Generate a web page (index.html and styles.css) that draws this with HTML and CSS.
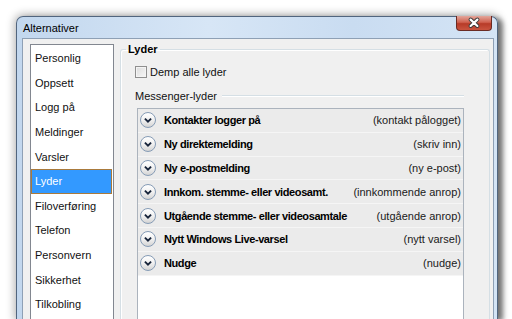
FILE: index.html
```html
<!DOCTYPE html>
<html>
<head>
    <meta charset="UTF-8">
    <title>Alternativer</title>
    <link rel="stylesheet" href="styles.css">
</head>
<body>
    <div class="desk">
        <div class="window">
            <div class="titlebar">
                <span class="title">Alternativer</span>
                <span class="close">
                    <svg width="35" height="14" viewBox="0 0 35 14">
                        <path d="M14 3.5 L21 10 M21 3.5 L14 10" stroke="#3b3b3b" stroke-width="4.2" stroke-linecap="round" fill="none"/>
                        <path d="M14 3.5 L21 10 M21 3.5 L14 10" stroke="#fff" stroke-width="2.2" stroke-linecap="round" fill="none"/>
                    </svg>
                </span>
            </div>
            <div class="client">
                <ul class="nav">
                    <li>Personlig</li>
                    <li>Oppsett</li>
                    <li>Logg på</li>
                    <li>Meldinger</li>
                    <li>Varsler</li>
                    <li class="active">Lyder</li>
                    <li>Filoverføring</li>
                    <li>Telefon</li>
                    <li>Personvern</li>
                    <li>Sikkerhet</li>
                    <li>Tilkobling</li>
                </ul>
                <fieldset class="group">
                    <legend>Lyder</legend>
                    <label class="check"><span class="box"></span>Demp alle lyder</label>
                    <div class="sep"><span>Messenger-lyder</span></div>
                    <div class="sounds">
                        <div class="row"><span class="chev"><svg width="14" height="14" viewBox="0 0 14 14"><path d="M3.9 5.6 7 8.6 10.1 5.6" fill="none" stroke="#17243a" stroke-width="1.9"/></svg></span><b>Kontakter logger på</b><span class="hint">(kontakt pålogget)</span></div>
                        <div class="row"><span class="chev"><svg width="14" height="14" viewBox="0 0 14 14"><path d="M3.9 5.6 7 8.6 10.1 5.6" fill="none" stroke="#17243a" stroke-width="1.9"/></svg></span><b>Ny direktemelding</b><span class="hint">(skriv inn)</span></div>
                        <div class="row"><span class="chev"><svg width="14" height="14" viewBox="0 0 14 14"><path d="M3.9 5.6 7 8.6 10.1 5.6" fill="none" stroke="#17243a" stroke-width="1.9"/></svg></span><b>Ny e-postmelding</b><span class="hint">(ny e-post)</span></div>
                        <div class="row"><span class="chev"><svg width="14" height="14" viewBox="0 0 14 14"><path d="M3.9 5.6 7 8.6 10.1 5.6" fill="none" stroke="#17243a" stroke-width="1.9"/></svg></span><b>Innkom. stemme- eller videosamt.</b><span class="hint">(innkommende anrop)</span></div>
                        <div class="row"><span class="chev"><svg width="14" height="14" viewBox="0 0 14 14"><path d="M3.9 5.6 7 8.6 10.1 5.6" fill="none" stroke="#17243a" stroke-width="1.9"/></svg></span><b>Utgående stemme- eller videosamtale</b><span class="hint">(utgående anrop)</span></div>
                        <div class="row"><span class="chev"><svg width="14" height="14" viewBox="0 0 14 14"><path d="M3.9 5.6 7 8.6 10.1 5.6" fill="none" stroke="#17243a" stroke-width="1.9"/></svg></span><b>Nytt Windows Live-varsel</b><span class="hint">(nytt varsel)</span></div>
                        <div class="row"><span class="chev"><svg width="14" height="14" viewBox="0 0 14 14"><path d="M3.9 5.6 7 8.6 10.1 5.6" fill="none" stroke="#17243a" stroke-width="1.9"/></svg></span><b>Nudge</b><span class="hint">(nudge)</span></div>
                    </div>
                </fieldset>
            </div>
        </div>
    </div>
</body>
</html>
```

FILE: styles.css
```css
/* reset */
html, body{
    margin: 0;
    padding: 0;
}

body{
    width: 512px;
    height: 319px;
    overflow: hidden;
    background: #fff;
    font-family: "Liberation Sans", Arial, sans-serif;
    font-size: 11px;
    color: #111;
}

/* desktop + window */
.desk{
    padding: 16px 0 0 16px;
}

.window{
    box-sizing: border-box;
    width: 482px;
    height: 303px;
    display: flex;
    flex-direction: column;
    padding: 0 3px 0 5px;
    border: 1px solid #51657e;
    border-bottom: none;
    border-radius: 7px 7px 0 0;
    background: linear-gradient(to right, #c2d7ee 0%, #d7e6f6 40%, #c9dcf1 70%, #d4e4f5 100%);
    box-shadow: 0 0 9px 2px rgba(0,0,0,0.28), 5px 2px 5px rgba(0,0,0,0.45);
}

.titlebar{
    height: 21px;
    display: flex;
    justify-content: space-between;
    align-items: flex-start;
}

.title{
    padding: 5px 0 0 1px;
    line-height: 13px;
    color: #000;
}

.close{
    box-sizing: border-box;
    width: 36px;
    height: 15px;
    margin: -1px 2px 0 0;
    border: 1px solid #6a2b24;
    border-top: none;
    border-radius: 0 0 4px 4px;
    background: linear-gradient(#e3a79c 0%, #d0614f 45%, #b73b28 55%, #c9543f 100%);
    display: flex;
    justify-content: center;
}

/* client area */
.client{
    flex: 1;
    display: flex;
    padding: 5px 3px 0 7px;
    background: #f0f0f0;
    border: 1px solid #8ea0b5;
    border-bottom: none;
}

.nav{
    width: 84px;
    box-sizing: border-box;
    flex-shrink: 0;
    margin: 0;
    padding: 1px 0 0 0;
    list-style: none;
    background: #fff;
    border: 1px solid #828790;
    border-bottom: none;
}

.nav li{
    box-sizing: border-box;
    height: 24.6px;
    display: flex;
    align-items: center;
    padding-left: 4px;
}

.nav li.active{
    margin: 0 1px 0 0;
    padding-left: 3px;
    background: #3399ff;
    color: #fff;
    border: 1px solid #a97a3c;
}

/* group box */
.group{
    flex: 1;
    min-width: 0;
    display: flex;
    flex-direction: column;
    margin: -2px 0 0 6px;
    padding: 0 25px 0 14px;
    border: 1px solid #d5dfe5;
    border-bottom: none;
    border-radius: 3px 3px 0 0;
    box-shadow: inset 1px 1px 0 #fff;
}

.group legend{
    margin-left: -9px;
    padding: 0 2px;
    font-weight: bold;
    line-height: 14px;
    color: #000;
}

.check{
    display: flex;
    align-items: center;
    gap: 3px;
    margin-top: 9px;
    line-height: 14px;
}

.check .box{
    box-sizing: border-box;
    width: 12px;
    height: 12px;
    border: 1px solid #8f8f8f;
    background: linear-gradient(135deg, #dcdcdc, #f7f7f7);
    box-shadow: inset 0 0 0 1px #f4f4f4;
}

.sep{
    display: flex;
    align-items: center;
    gap: 4px;
    margin-top: 10px;
    line-height: 14px;
}

.sep::after{
    content: "";
    flex: 1;
    height: 0;
    margin-left: 1px;
    border-top: 1px solid #d5dfe5;
    border-bottom: 1px solid #fff;
}

/* sound list */
.sounds{
    flex: 1;
    margin: 5px 0 0 2px;
    background: #fff;
    border: 1px solid #abb3bd;
    border-bottom: none;
}

.row{
    box-sizing: border-box;
    height: 23.8px;
    display: flex;
    align-items: center;
    padding: 0 2px 0 2px;
    background: #ebebeb;
    border-bottom: 1px solid #f5f5f5;
}

.chev{
    width: 14px;
    height: 14px;
    flex-shrink: 0;
    border: 1px solid #869cb6;
    border-radius: 50%;
    background: linear-gradient(#ffffff 0%, #f1f1f1 50%, #d4d4d4 100%);
    display: flex;
}

.row b{
    margin-left: 8px;
    letter-spacing: -0.4px;
    color: #000;
    white-space: nowrap;
}

.hint{
    margin-left: auto;
    white-space: nowrap;
    color: #1a1a1a;
}
```
